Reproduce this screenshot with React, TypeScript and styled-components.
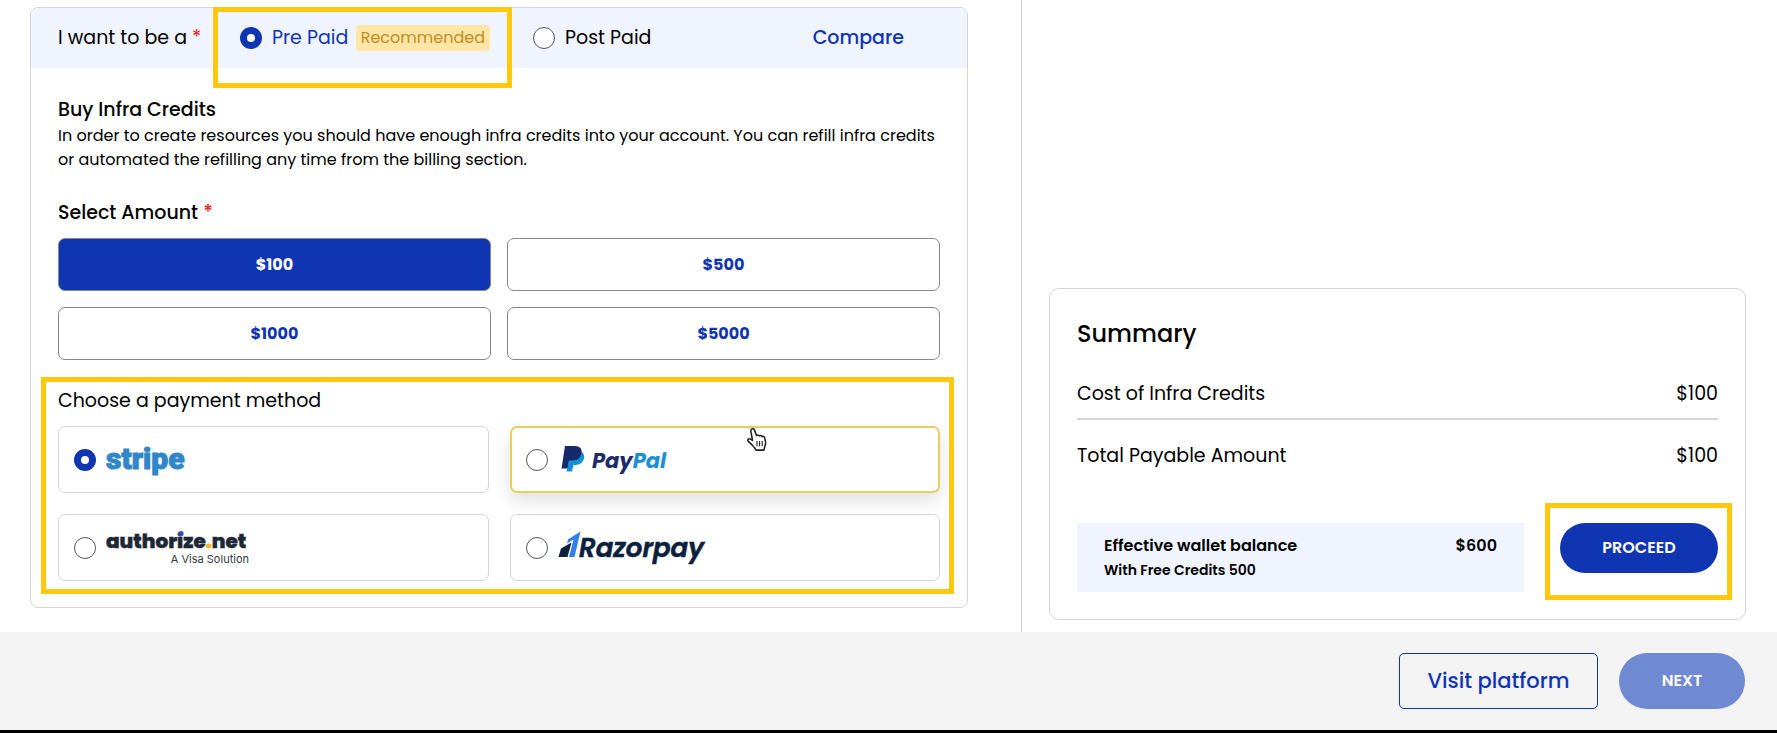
import React, { useState } from "react";
import styled, { createGlobalStyle, css } from "styled-components";

const blue = "#1035b3";
const ink = "#000";
const line = "#d5d5d7";
const marker = "#fec80f";

const GlobalStyle = createGlobalStyle`
  *, *::before, *::after { box-sizing: border-box; }
  body {
    margin: 0;
    background: #fff;
    color: ${ink};
    font-family: Poppins, Inter, "Liberation Sans", sans-serif;
    font-size: 19px;
    line-height: 28px;
  }
  button, input { font: inherit; }
`;

const Columns = styled.main`
  display: grid;
  grid-template-columns: minmax(0, 1022fr) minmax(0, 755fr);
`;

const PlanColumn = styled.section`
  padding: 7px 53px 24px 30px;
  border-right: 1px solid #cfcfd1;
`;

const SummaryColumn = styled.aside`
  display: flex;
  flex-direction: column;
  justify-content: flex-end;
  padding: 0 31px 12px 27px;
`;

const Card = styled.div`
  border: 1px solid ${line};
  border-radius: 8px;
`;

const highlight = css`
  position: relative;
  &::after {
    content: "";
    position: absolute;
    border: 5px solid ${marker};
    pointer-events: none;
  }
`;

const PlanBar = styled.fieldset`
  display: flex;
  height: 60px;
  margin: 0;
  padding: 0 63px 0 27px;
  border: 0;
  border-radius: 7px 7px 0 0;
  background: #eff4fe;
  white-space: nowrap;
`;

const PlanLabel = styled.span`
  width: 182px;
  line-height: 60px;
`;

const Required = styled.span`
  color: #ee1c1c;
`;

const Option = styled.label<{ $active?: boolean }>`
  display: flex;
  align-items: center;
  gap: 10px;
  color: ${(p) => (p.$active ? blue : ink)};
  cursor: pointer;
`;

const RecommendedOption = styled.div`
  ${highlight}
  display: flex;
  align-items: center;
  justify-content: space-between;
  width: 250px;
  margin-right: 43px;
  &::after {
    inset: -1px -22px -20px -27px;
  }
`;

const Badge = styled.span`
  padding: 0 5px;
  border-radius: 4px;
  background: #ffe6a6;
  color: #c58c22;
  font-size: 16px;
  line-height: 26px;
`;

const CompareLink = styled.a`
  align-self: center;
  margin-left: auto;
  color: ${blue};
  font-weight: 500;
  text-decoration: none;
`;

const Radio = styled.input.attrs({ type: "radio" })`
  flex: none;
  appearance: none;
  width: 22px;
  height: 22px;
  margin: 0;
  border: 1px solid #55565c;
  border-radius: 50%;
  background: #fff;
  cursor: pointer;
  &:checked {
    border: 7px solid ${blue};
  }
`;

const PlanBody = styled.div`
  padding: 28px 27px 26px;
`;

const Heading = styled.h2`
  margin: 0;
  font-size: 19px;
  font-weight: 500;
`;

const Copy = styled.p`
  margin: 0;
  font-size: 16px;
  line-height: 24px;
`;

const FieldGroup = styled.section`
  margin-top: 27px;
`;

const Legend = styled.h3<{ $medium?: boolean }>`
  margin: 0 0 11px;
  font-size: 19px;
  font-weight: ${(p) => (p.$medium ? 500 : 400)};
`;

const AmountGrid = styled.div`
  display: grid;
  grid-template-columns: 1fr 1fr;
  gap: 16px;
`;

const AmountButton = styled.button<{ $active: boolean }>`
  height: 53px;
  border: 1px solid #858689;
  border-radius: 7px;
  background: ${(p) => (p.$active ? blue : "#fff")};
  color: ${(p) => (p.$active ? "#fff" : blue)};
  font-size: 16px;
  font-weight: 700;
  cursor: pointer;
`;

const PaymentGroup = styled(FieldGroup)`
  ${highlight}
  &::after {
    inset: -10px -14px -13px -17px;
  }
`;

const MethodGrid = styled.div`
  display: grid;
  grid-template-columns: 1fr 1fr;
  gap: 21px;
`;

const Method = styled.label<{ $hovered?: boolean }>`
  position: relative;
  display: flex;
  align-items: center;
  gap: 10px;
  height: 67px;
  padding-left: 15px;
  border: 1px solid ${line};
  border-radius: 7px;
  background: #fff;
  cursor: pointer;
  ${(p) =>
    p.$hovered &&
    css`
      border: 2px solid #e5cf60;
      padding-left: 14px;
      box-shadow: 0 8px 18px rgba(0, 0, 0, 0.12);
    `}
`;

const Logo = styled.svg`
  display: block;
  flex: none;
  overflow: visible;
`;

const Pointer = styled.svg`
  position: absolute;
  top: -1px;
  left: 55%;
`;

const SummaryCard = styled(Card)`
  padding: 27px;
  border-radius: 10px;
`;

const SummaryTitle = styled.h2`
  margin: 0 0 28px;
  font-size: 24px;
  font-weight: 500;
  line-height: 36px;
`;

const CostList = styled.dl`
  margin: 0 0 53px;
`;

const CostRow = styled.div<{ $ruled?: boolean }>`
  display: flex;
  justify-content: space-between;
  ${(p) =>
    p.$ruled &&
    css`
      margin-bottom: 22px;
      padding-bottom: 10px;
      border-bottom: 2px solid ${line};
    `}
  dd {
    margin: 0;
  }
`;

const CheckoutRow = styled.div`
  display: flex;
  align-items: flex-start;
  gap: 36px;
`;

const Wallet = styled.div`
  display: flex;
  flex: 1;
  justify-content: space-between;
  height: 69px;
  padding: 10px 27px;
  background: #eff4fe;
  font-size: 16px;
  font-weight: 600;
  line-height: 25px;
`;

const WalletNote = styled.div`
  font-size: 14px;
`;

const ProceedFrame = styled.div`
  ${highlight}
  &::after {
    inset: -20px -14px -27px -15px;
  }
`;

const PillButton = styled.button<{ $large?: boolean }>`
  display: block;
  width: ${(p) => (p.$large ? 126 : 158)}px;
  height: ${(p) => (p.$large ? 56 : 50)}px;
  padding: 0;
  border: 0;
  border-radius: 28px;
  background: ${blue};
  color: #fff;
  font-size: 16px;
  font-weight: 600;
  cursor: pointer;
  &:disabled {
    background: #7089d3;
    cursor: default;
  }
`;

const Footer = styled.footer`
  display: flex;
  justify-content: flex-end;
  gap: 21px;
  padding: 21px 32px;
  border-bottom: 3px solid #000;
  background: #f3f3f3;
`;

const OutlineButton = styled.button`
  width: 199px;
  height: 56px;
  padding: 0;
  border: 1px solid ${blue};
  border-radius: 5px;
  background: transparent;
  color: ${blue};
  font-size: 21px;
  font-weight: 500;
  cursor: pointer;
`;

const StripeLogo = () => (
  <Logo width="80" height="36" viewBox="0 0 80 36" role="img" aria-label="Stripe">
    <text x="0" y="27" fill="#3086c8" stroke="#3086c8" strokeWidth="1" fontFamily="Roboto, sans-serif" fontSize="30" fontWeight="900">
      stripe
    </text>
  </Logo>
);

const PayPalLogo = () => (
  <Logo width="110" height="36" viewBox="0 0 110 36" role="img" aria-label="PayPal">
    <path d="M13 10h11c2.500 2 2.800 5 1.500 8-1.500 3.500-4.500 5-8.500 5h-1.500l-1.500 6.500H8.500z" fill="#1090d8" />
    <path d="M7 4h9.500c5.500 0 8 3 7 7.500-1 5-4.500 7-9.500 7H11L9.500 26.500H3.500z" fill="#162a6b" />
    <text x="34" y="26" fontFamily="Poppins, Inter, sans-serif" fontSize="21" fontWeight="700" fontStyle="italic">
      <tspan fill="#1d2b6d">Pay</tspan>
      <tspan fill="#1a8fd3">Pal</tspan>
    </text>
  </Logo>
);

const AuthorizeLogo = () => (
  <Logo width="145" height="36" viewBox="0 0 145 36" role="img" aria-label="Authorize.net, a Visa Solution">
    <text x="0" y="18" fill="#1d2836" stroke="#1d2836" strokeWidth="0.5" fontFamily="Poppins, Inter, sans-serif" fontSize="20" fontWeight="800">
      authorize<tspan fill="#fdb515" stroke="#fdb515" strokeWidth="1">.</tspan>net
    </text>
    <circle cx="75" cy="3.500" r="2.600" fill="#2b4fc0" />
    <text x="143" y="33" fill="#343b46" fontFamily="Inter, sans-serif" fontSize="11" textAnchor="end">
      A Visa Solution
    </text>
  </Logo>
);

const RazorpayLogo = () => (
  <Logo width="150" height="36" viewBox="0 0 150 36" role="img" aria-label="Razorpay">
    <path d="M22.500 1.500L16.500 27H11l4.500-17.500-6.500 4 1.200-4.200z" fill="#357ef0" />
    <path d="M13.500 12.500L9.500 27H.5L3 18.500z" fill="#0c1f3f" />
    <text x="21" y="27" fill="#0c1f3f" stroke="#0c1f3f" strokeWidth="0.6" fontFamily="Poppins, Inter, sans-serif" fontSize="26" fontWeight="600" fontStyle="italic">
      Razorpay
    </text>
  </Logo>
);

const HandPointer = () => (
  <Pointer width="23" height="25" viewBox="0 0 22 24" aria-hidden="true">
    <path
      d="M5.200 2.200c.9-.9 2.400-.5 2.900.8l2 5.200c.6-.8 2.100-.7 2.600.3.800-.7 2.200-.4 2.600.7 1-.5 2.300 0 2.600 1.200l.8 3.800c.3 1.700 0 2.800-.6 4.200l-.9 3.800H9.500c-.7-2.200-2.200-3.500-3.800-5l-3.500-3.400c-1.400-1.400.2-3.200 2-2.200l2 1.300L4.700 4.300c-.2-.8-.1-1.500.5-2.100z"
      fill="#fff"
      stroke="#222"
      strokeWidth="1.500"
      strokeLinejoin="round"
    />
    <path d="M10.500 13.500v5M13 13.500v5M15.500 13.500v5" stroke="#222" strokeWidth="1.100" />
  </Pointer>
);

const amounts = [100, 500, 1000, 5000];

const methods = [
  { id: "stripe", Mark: StripeLogo },
  { id: "paypal", Mark: PayPalLogo },
  { id: "authorize", Mark: AuthorizeLogo },
  { id: "razorpay", Mark: RazorpayLogo },
];

const freeCredits = 500;

export default function App() {
  const [plan, setPlan] = useState("pre");
  const [amount, setAmount] = useState(100);
  const [method, setMethod] = useState("stripe");

  return (
    <>
      <GlobalStyle />
      <Columns>
        <PlanColumn>
          <Card>
            <PlanBar aria-label="Plan">
              <PlanLabel>
                I want to be a <Required>*</Required>
              </PlanLabel>
              <RecommendedOption>
                <Option $active={plan === "pre"}>
                  <Radio name="plan" checked={plan === "pre"} onChange={() => setPlan("pre")} />
                  Pre Paid
                </Option>
                <Badge>Recommended</Badge>
              </RecommendedOption>
              <Option $active={plan === "post"}>
                <Radio name="plan" checked={plan === "post"} onChange={() => setPlan("post")} />
                Post Paid
              </Option>
              <CompareLink href="#compare">Compare</CompareLink>
            </PlanBar>
            <PlanBody>
              <Heading>Buy Infra Credits</Heading>
              <Copy>
                In order to create resources you should have enough infra credits into your account. You can refill
                infra credits or automated the refilling any time from the billing section.
              </Copy>
              <FieldGroup>
                <Legend $medium>
                  Select Amount <Required>*</Required>
                </Legend>
                <AmountGrid>
                  {amounts.map((value) => (
                    <AmountButton
                      key={value}
                      type="button"
                      $active={amount === value}
                      aria-pressed={amount === value}
                      onClick={() => setAmount(value)}
                    >
                      {`$${value}`}
                    </AmountButton>
                  ))}
                </AmountGrid>
              </FieldGroup>
              <PaymentGroup>
                <Legend>Choose a payment method</Legend>
                <MethodGrid>
                  {methods.map(({ id, Mark }) => (
                    <Method key={id} $hovered={id === "paypal"}>
                      <Radio name="method" checked={method === id} onChange={() => setMethod(id)} />
                      <Mark />
                      {id === "paypal" && <HandPointer />}
                    </Method>
                  ))}
                </MethodGrid>
              </PaymentGroup>
            </PlanBody>
          </Card>
        </PlanColumn>
        <SummaryColumn>
          <SummaryCard>
            <SummaryTitle>Summary</SummaryTitle>
            <CostList>
              <CostRow $ruled>
                <dt>Cost of Infra Credits</dt>
                <dd>{`$${amount}`}</dd>
              </CostRow>
              <CostRow>
                <dt>Total Payable Amount</dt>
                <dd>{`$${amount}`}</dd>
              </CostRow>
            </CostList>
            <CheckoutRow>
              <Wallet>
                <div>
                  Effective wallet balance
                  <WalletNote>{`With Free Credits ${freeCredits}`}</WalletNote>
                </div>
                <span>{`$${amount + freeCredits}`}</span>
              </Wallet>
              <ProceedFrame>
                <PillButton type="button">PROCEED</PillButton>
              </ProceedFrame>
            </CheckoutRow>
          </SummaryCard>
        </SummaryColumn>
      </Columns>
      <Footer>
        <OutlineButton type="button">Visit platform</OutlineButton>
        <PillButton type="button" $large disabled>
          NEXT
        </PillButton>
      </Footer>
    </>
  );
}
